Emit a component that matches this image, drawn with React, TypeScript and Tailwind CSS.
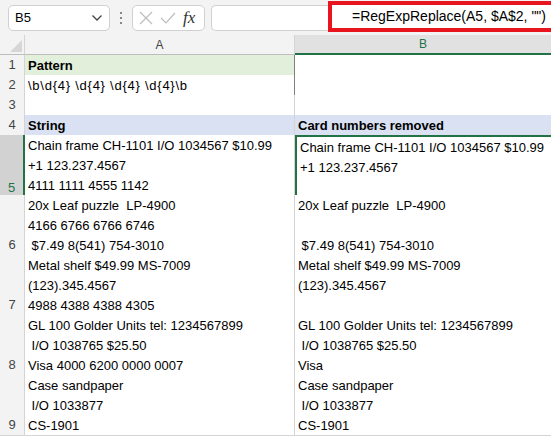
import React from "react";

// Rows of the sheet: number, height in lines, A text lines, B text lines
type Row = {
  n: number;
  lines: number;
  a: string[];
  b: string[];
  kind?: "pattern" | "regex" | "head" | "blank";
};

const rows: Row[] = [
  { n: 1, lines: 1, a: ["Pattern"], b: [], kind: "pattern" },
  { n: 2, lines: 1, a: ["\\b\\d{4} \\d{4} \\d{4} \\d{4}\\b"], b: [], kind: "regex" },
  { n: 3, lines: 1, a: [], b: [], kind: "blank" },
  { n: 4, lines: 1, a: ["String"], b: ["Card numbers removed"], kind: "head" },
  {
    n: 5,
    lines: 3,
    a: ["Chain frame CH-1101 I/O 1034567 $10.99", "+1 123.237.4567", "4111 1111 4555 1142"],
    b: ["Chain frame CH-1101 I/O 1034567 $10.99", "+1 123.237.4567", ""],
  },
  {
    n: 6,
    lines: 3,
    a: ["20x Leaf puzzle  LP-4900", "4166 6766 6766 6746", " $7.49 8(541) 754-3010"],
    b: ["20x Leaf puzzle  LP-4900", "", " $7.49 8(541) 754-3010"],
  },
  {
    n: 7,
    lines: 3,
    a: ["Metal shelf $49.99 MS-7009", "(123).345.4567", "4988 4388 4388 4305"],
    b: ["Metal shelf $49.99 MS-7009", "(123).345.4567", ""],
  },
  {
    n: 8,
    lines: 3,
    a: ["GL 100 Golder Units tel: 1234567899", " I/O 1038765 $25.50", "Visa 4000 6200 0000 0007"],
    b: ["GL 100 Golder Units tel: 1234567899", " I/O 1038765 $25.50", "Visa"],
  },
  {
    n: 9,
    lines: 3,
    a: ["Case sandpaper", " I/O 1033877", "CS-1901"],
    b: ["Case sandpaper", " I/O 1033877", "CS-1901"],
  },
];

const font = { fontFamily: '"Liberation Sans", Arial, sans-serif' };

const CellText = ({ lines, bold, wide }: { lines: string[]; bold?: boolean; wide?: boolean }) => (
  <div
    className={`flex flex-col pl-[3px] whitespace-pre text-[13px] text-black ${bold ? "font-bold" : ""} ${
      wide ? "tracking-[0.75px]" : ""
    }`}
  >
    {lines.map((l, i) => (
      <div key={i} className="h-[20px] leading-[21px]">
        {l}
      </div>
    ))}
  </div>
);

const App = () => {
  return (
    <div className="w-[551px] h-[436px] overflow-hidden bg-white" style={font}>
      {/* Formula bar */}
      <div className="relative h-[35px] bg-[#f3f3f3] flex items-center pl-[8px] gap-[6px]">
        <div className="w-[102px] h-[26px] bg-white border border-[#d0d0d0] rounded-[5px] flex items-center justify-between px-[6px]">
          <span className="text-[13px] text-black">B5</span>
          <svg width="12" height="8" viewBox="0 0 12 8">
            <path d="M1.5 1.5 L6 6 L10.5 1.5" fill="none" stroke="#444" strokeWidth="1.3" />
          </svg>
        </div>
        <div className="w-[10px] flex flex-col items-center gap-[3px]">
          <span className="w-[2px] h-[2px] bg-[#888]" />
          <span className="w-[2px] h-[2px] bg-[#888]" />
          <span className="w-[2px] h-[2px] bg-[#888]" />
        </div>
        <div className="w-[73px] h-[26px] bg-white border border-[#d0d0d0] rounded-[5px] flex items-center pl-[6px] gap-[7px]">
          <svg width="14" height="14" viewBox="0 0 14 14">
            <path d="M1 1 L13 13 M13 1 L1 13" stroke="#bdbdbd" strokeWidth="1.2" />
          </svg>
          <svg width="16" height="14" viewBox="0 0 16 14">
            <path d="M1 7 L6 12 L15 2" fill="none" stroke="#bdbdbd" strokeWidth="1.2" />
          </svg>
          <span
            className="italic text-[17px] text-[#333] leading-none"
            style={{ fontFamily: '"Liberation Serif", "Times New Roman", serif' }}
          >
            fx
          </span>
        </div>
        <div className="flex-1 h-[26px] bg-white border border-[#d0d0d0] border-r-0 rounded-l-[5px]" />
        {/* highlighted formula */}
        <div className="absolute left-[328px] top-[1px] w-[223px] h-[31px] border-[4px] border-r-0 border-[#e8141e] bg-white flex items-center pl-[20px]">
          <span className="text-[14px] text-black">=RegExpReplace(A5, $A$2, "")</span>
        </div>
      </div>

      {/* Column headers */}
      <div className="grid grid-cols-[25px_270px_1fr] h-[20px] bg-[#f3f3f3]">
        <div className="relative border-r border-[#d4d4d4] border-b border-b-[#bdbdbd]">
          <svg className="absolute right-[2px] bottom-[2px]" width="12" height="12" viewBox="0 0 12 12">
            <path d="M12 0 L12 12 L0 12 Z" fill="#d6d6d6" />
          </svg>
        </div>
        <div className="flex items-center justify-center text-[12px] text-[#444] border-r border-[#d4d4d4] border-b border-b-[#bdbdbd]">
          A
        </div>
        <div className="flex items-center justify-center text-[12px] text-[#217346] bg-[#e1e1e1] border-b-2 border-[#217346]">
          B
        </div>
      </div>

      {/* Rows */}
      {rows.map((r) => {
        const h = r.lines * 20;
        const selected = r.n === 5;
        let aBg = "bg-white";
        let bBg = "bg-white";
        if (r.kind === "pattern") aBg = "bg-[#e2efda]";
        if (r.kind === "head") {
          aBg = "bg-[#d9e1f2]";
          bBg = "bg-[#d9e1f2]";
        }
        const aBorder =
          r.kind === "pattern"
            ? "border-r border-r-[#808080] border-b border-b-[#e2efda]"
            : r.kind === "regex"
            ? "border-r border-r-[#808080] border-b border-b-[#808080]"
            : "border-r border-r-[#d4d4d4] border-b border-b-[#d4d4d4]";
        return (
          <div key={r.n} className="grid grid-cols-[25px_270px_1fr]" style={{ height: h }}>
            <div
              className={`flex items-end justify-center text-[13px] leading-[20px] border-b ${
                selected
                  ? "bg-[#d2d2d2] text-[#217346] border-r-2 border-r-[#217346] border-b-[#bdbdbd]"
                  : "bg-[#f3f3f3] text-[#444] border-r border-r-[#d4d4d4] border-b-[#d4d4d4]"
              }`}
            >
              {r.n}
            </div>
            <div className={`${aBg} ${aBorder} box-border`}>
              <CellText lines={r.a} bold={r.kind === "pattern" || r.kind === "head"} wide={r.kind === "regex"} />
            </div>
            <div
              className={`${bBg} box-border ${
                selected ? "border-2 border-[#217346] border-r-0" : "border-b border-[#d4d4d4]"
              }`}
            >
              <CellText lines={r.b} bold={r.kind === "head"} />
            </div>
          </div>
        );
      })}
    </div>
  );
};

export default App;
